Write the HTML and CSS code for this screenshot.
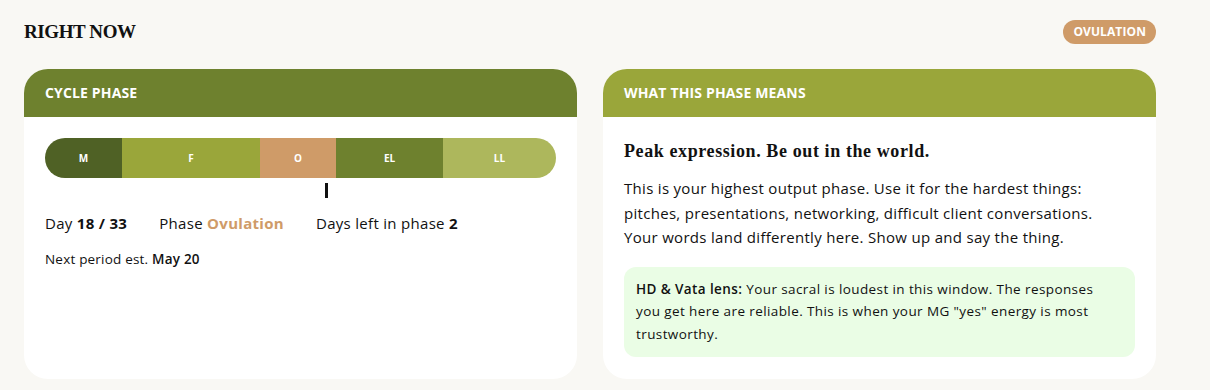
FILE: index.html
```html
<!DOCTYPE html>
<html lang="en">
<head>
    <meta charset="UTF-8">
    <meta name="viewport" content="width=device-width, initial-scale=1.0">
    <title>Right Now</title>
    <link rel="stylesheet" href="styles.css">
</head>
<body>

<div class="page">
    <!-- Section title -->
    <div class="section-head">
        <h2>RIGHT NOW</h2>
        <span class="badge">OVULATION</span>
    </div>

    <div class="cards">
        <!-- Cycle phase card -->
        <div class="card">
            <div class="card-header dark">CYCLE PHASE</div>
            <div class="card-body">
                <div class="track">
                    <div class="bar">
                        <div class="seg seg-m">M</div>
                        <div class="seg seg-f">F</div>
                        <div class="seg seg-o">O</div>
                        <div class="seg seg-el">EL</div>
                        <div class="seg seg-ll">LL</div>
                    </div>
                    <div class="marker" style="left: 54.8%;"></div>
                </div>

                <div class="stats">
                    <span>Day <b>18 / 33</b></span>
                    <span>Phase <b class="accent">Ovulation</b></span>
                    <span>Days left in phase <b>2</b></span>
                </div>
                <p class="next">Next period est. <span class="medium">May 20</span></p>
            </div>
        </div>

        <!-- Meaning card -->
        <div class="card">
            <div class="card-header light">WHAT THIS PHASE MEANS</div>
            <div class="card-body">
                <h3>Peak expression. Be out in the world.</h3>
                <p class="desc">This is your highest output phase. Use it for the hardest things: pitches, presentations, networking, difficult client conversations. Your words land differently here. Show up and say the thing.</p>
                <div class="lens">
                    <span class="medium">HD &amp; Vata lens:</span> Your sacral is loudest in this window. The responses you get here are reliable. This is when your MG "yes" energy is most trustworthy.
                </div>
            </div>
        </div>
    </div>
</div>

</body>
</html>
```

FILE: styles.css
```css
/* General styles */
body {
    font-family: "Open Sans", Lato, sans-serif;
    background-color: #f9f8f4;
    color: #111;
    margin: 0;
    padding: 0;
}

.page {
    width: 1132px;
    padding: 20px 0 0 24px;
}

/* Section heading */
.section-head {
    display: flex;
    justify-content: space-between;
    align-items: center;
    height: 24px;
    margin-bottom: 25px;
}

.section-head h2 {
    margin: 0;
    font-family: "Liberation Serif", serif;
    font-size: 19px;
    font-weight: bold;
    letter-spacing: -0.4px;
}

.badge {
    background-color: #cf9b68;
    color: white;
    font-size: 12px;
    font-weight: 700;
    letter-spacing: 0.1px;
    padding: 0 10px;
    height: 24px;
    line-height: 24px;
    border-radius: 12px;
}

/* Cards */
.cards {
    display: grid;
    grid-template-columns: 1fr 1fr;
    gap: 26px;
}

.card {
    background-color: white;
    border-radius: 24px;
    overflow: hidden;
    height: 310px;
}

.card-header {
    height: 48px;
    line-height: 48px;
    padding: 0 21px;
    color: white;
    font-size: 14px;
    font-weight: 700;
    letter-spacing: 0.15px;
}

.card-header.dark {
    background-color: #6e812e;
}

.card-header.light {
    background-color: #9aa63a;
}

.card-body {
    padding: 21px 21px 22px;
}

/* Phase bar */
.track {
    position: relative;
    height: 40px;
    margin-bottom: 34px;
}

.bar {
    display: flex;
    height: 40px;
    border-radius: 20px;
    overflow: hidden;
}

.seg {
    display: flex;
    align-items: center;
    justify-content: center;
    color: white;
    font-size: 10px;
    font-weight: 700;
}

.seg-m { flex: 77; background-color: #4f6125; }
.seg-f { flex: 138; background-color: #9aa63a; }
.seg-o { flex: 76; background-color: #cf9b68; }
.seg-el { flex: 107; background-color: #6e812e; }
.seg-ll { flex: 113; background-color: #adb75c; }

.marker {
    position: absolute;
    top: 45px;
    width: 3px;
    height: 15px;
    background-color: #111;
}

.stats {
    display: flex;
    gap: 32px;
    font-size: 15px;
    letter-spacing: 0.3px;
    line-height: 22px;
}

.stats b {
    font-weight: 700;
}

.accent {
    color: #cf9b68;
}

.next {
    margin: 15px 0 0;
    font-size: 13.5px;
    letter-spacing: 0.2px;
    line-height: 20px;
}

.medium {
    font-weight: 600;
}

/* Meaning card */
.card-body h3 {
    margin: 0 0 12px;
    font-family: "Liberation Serif", serif;
    font-size: 18px;
    letter-spacing: 0.6px;
    line-height: 26px;
    font-weight: bold;
}

.desc {
    max-width: 490px;
    margin: 0 0 17px;
    font-size: 15px;
    letter-spacing: 0.3px;
    line-height: 24.5px;
}

.lens {
    background-color: #eafde5;
    border-radius: 12px;
    padding: 11px 24px 12px 12px;
    font-size: 13.5px;
    letter-spacing: 0.4px;
    line-height: 22.5px;
}
```
